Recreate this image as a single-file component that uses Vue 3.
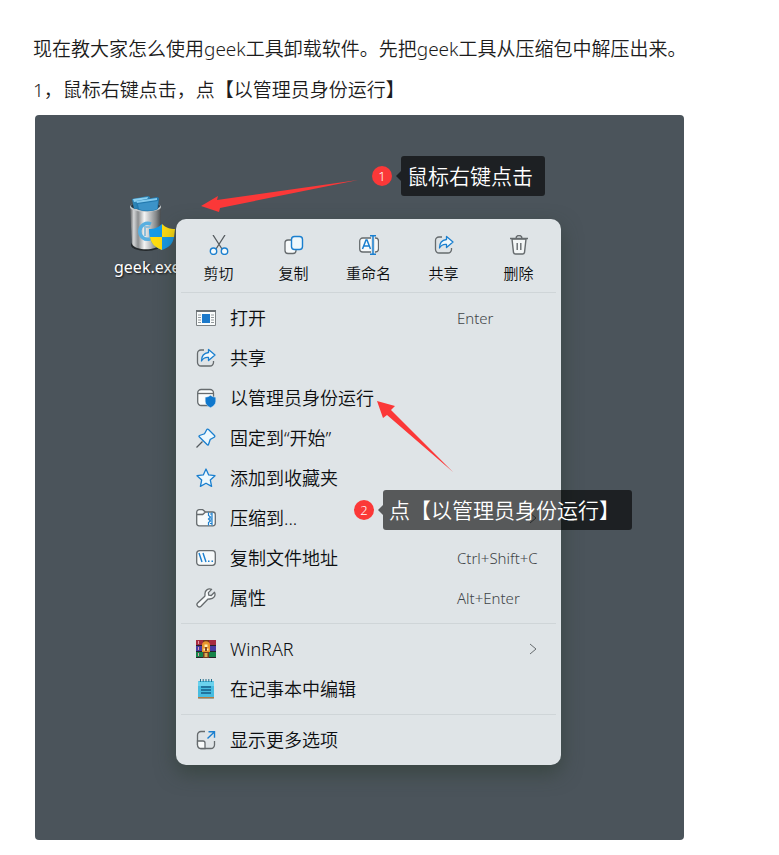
<template>
  <main class="article">
    <p>现在教大家怎么使用geek工具卸载软件。先把geek工具从压缩包中解压出来。</p>
    <p>1，鼠标右键点击，点【以管理员身份运行】</p>

    <section class="desktop">
      <div class="shortcut">
        <svg class="bin" viewBox="0 0 52 60" aria-hidden="true">
          <defs>
            <linearGradient id="metal" x1="0" x2="1" y1="0" y2="0">
              <stop offset="0" stop-color="#55585a" />
              <stop offset="0.12" stop-color="#d4d6d7" />
              <stop offset="0.26" stop-color="#8b8e90" />
              <stop offset="0.46" stop-color="#f4f5f5" />
              <stop offset="0.68" stop-color="#b3b6b8" />
              <stop offset="0.84" stop-color="#85888a" />
              <stop offset="1" stop-color="#484b4d" />
            </linearGradient>
          </defs>
          <ellipse cx="20" cy="50" rx="15" ry="6" fill="#24292c" />
          <path d="M4 12 6 49c3 7 25 7 28 0l1-37z" fill="url(#metal)" />
          <ellipse cx="19.500" cy="12" rx="15.500" ry="5" fill="#c5c9cb" />
          <ellipse cx="19.500" cy="11" rx="14.500" ry="4" fill="#24333d" />
          <path d="M6 4 22 1l2 1-1 11-15 1z" fill="#2c83b5" />
          <path d="m7 4 15-2-1 3-13 2z" fill="#8bd0f0" />
          <path d="m10 6 21-4 2 1-1 11c-5 3-16 3-21 0z" fill="#2379ae" />
          <path d="m10 6 21-3v2L11 8z" fill="#82c9ed" />
          <path d="m12 9 20-3-1 8c-5 2-13 2-18 0z" fill="#3c93c8" />
          <path d="M25 29a8 8 0 1 0-1 15" fill="none" stroke="#58afe0" stroke-width="3.500" />
          <path d="M24 32h-5v9" fill="none" stroke="#8ebfdb" stroke-width="2" />
          <path d="M36 29c-4 4-8 5-13 5 0 12 3 17 13 21z" fill="#169ae8" />
          <path d="M36 29v13h12l1-8c-5 0-9-1-13-5z" fill="#ffdc10" />
          <path d="M36 42h12c-1 6-4 10-12 13z" fill="#169ae8" />
          <path d="M24 42h12v13c-8-3-11-7-12-13z" fill="#ffdc10" />
        </svg>
        <span>geek.exe</span>
      </div>

      <nav class="menu" aria-label="geek.exe">
        <ul class="toolbar">
          <li v-for="tool in tools" :key="tool.label">
            <button type="button">
              <svg class="icon" viewBox="0 0 20 20" aria-hidden="true" v-html="icons[tool.icon]"></svg>
              <span>{{ tool.label }}</span>
            </button>
          </li>
        </ul>

        <ul v-for="(group, i) in groups" :key="i" class="group">
          <li v-for="item in group" :key="item.label">
            <button type="button">
              <svg class="icon" viewBox="0 0 20 20" aria-hidden="true" v-html="icons[item.icon]"></svg>
              <span>{{ item.label }}</span>
              <kbd v-if="item.keys">{{ item.keys }}</kbd>
              <svg v-if="item.more" class="chevron" viewBox="0 0 8 12" aria-hidden="true">
                <path d="m1 1 6 5-6 5" />
              </svg>
            </button>
          </li>
        </ul>
      </nav>

      <svg class="arrow arrow-one" viewBox="0 0 158 32" aria-hidden="true">
        <path d="M0 26 17 16 16 20 157 0 19 28 18 32z" />
      </svg>
      <svg class="arrow arrow-two" viewBox="0 0 76 71" aria-hidden="true">
        <path d="M0 0 18 5 14 9 76 71 10 14 6 17z" />
      </svg>

      <div class="callout callout-one">
        <span class="badge">1</span>
        <span class="tip">鼠标右键点击</span>
      </div>
      <div class="callout callout-two">
        <span class="badge">2</span>
        <span class="tip">点【以管理员身份运行】</span>
      </div>
    </section>
  </main>
</template>

<script setup>
const share = `
  <path d="M8 2H5a3.500 3.500 0 0 0-3.500 3.500v9A3.500 3.500 0 0 0 5 18h9a3.500 3.500 0 0 0 3.500-3.500V13" fill="none" stroke="#666b6e" stroke-width="1.300"/>
  <path d="M12.500 1.500 19 7l-6.500 5.500V9.500C9 9 7 10.500 5.500 13 5.500 8 8 5 12.500 4.500z" fill="#f0f8fc" stroke="#1a7fcf" stroke-width="1.300" stroke-linejoin="round"/>`;

const icons = {
  share,
  cut: `
    <path d="M4 0 13 14M16 0 7 14" stroke="#555b5f" stroke-width="1.300"/>
    <circle cx="4.500" cy="16.200" r="3.200" fill="#f4fafc" stroke="#1a7fcf" stroke-width="1.400"/>
    <circle cx="15.500" cy="16.200" r="3.200" fill="#f4fafc" stroke="#1a7fcf" stroke-width="1.400"/>`,
  copy: `
    <path d="M7 5H4a3 3 0 0 0-3 3v7.500a3 3 0 0 0 3 3h5a3 3 0 0 0 3-3V15" fill="#f7fafb" stroke="#666b6e" stroke-width="1.300"/>
    <rect x="7.500" y="1.500" width="11" height="13" rx="3" fill="#eef7fb" stroke="#1a7fcf" stroke-width="1.400"/>`,
  rename: `
    <path d="M12 3H3.700a3 3 0 0 0-3 3v8a3 3 0 0 0 3 3H12M16 3h.500a3 3 0 0 1 3 3v8a3 3 0 0 1-3 3H16" fill="#f7fafb" stroke="#666b6e" stroke-width="1.300"/>
    <path d="m3.500 14 3.500-9h1l3.500 9M5 11h5M11 .700h6M11 19.300h6M14 1v18" fill="none" stroke="#1a7fcf" stroke-width="1.500"/>`,
  trash: `
    <path d="m3 4 1.500 13.500A2 2 0 0 0 6.500 19h7a2 2 0 0 0 2-1.500L17 4z" fill="#f3f6f7" stroke="#666b6e" stroke-width="1.400"/>
    <path d="M1 3.500h18M7 3.500a3 3 0 0 1 6 0M8.200 8v7M11.800 8v7" fill="none" stroke="#666b6e" stroke-width="1.400"/>`,
  open: `
    <path d="M.500 2.500h19v15H.500z" fill="#fafcfc" stroke="#7c8285"/>
    <path d="M0 3h20" stroke="#6c7276" stroke-width="2"/>
    <path d="M2 7h3M2 9.500h3M2 12h3M2 14.500h3M15 7h3M15 9.500h3M15 12h3M15 14.500h3" stroke="#93999c"/>
    <path d="M6 6h8v9H6z" fill="#1c79ca"/>`,
  admin: `
    <rect x="1.700" y="1.500" width="15.800" height="16" rx="3.500" fill="#fafcfc" stroke="#666b6e" stroke-width="1.300"/>
    <path d="M2 5.500h15.500" stroke="#666b6e" stroke-width="1.300"/>
    <path d="M14.500 7.200c1.600 1.300 3.200 1.900 5.300 2v4c0 3-2 5-5.300 6.500-3.300-1.500-5.300-3.500-5.300-6.500v-4c2.100-.100 3.700-.700 5.300-2z" fill="#0f78cd" stroke="#e4edf2" stroke-width=".500"/>`,
  pin: `
    <path d="m6.500 13.500-6 6" stroke="#555b5f" stroke-width="1.300"/>
    <path d="m12.500 1.500 6 6c.6.6.4 1.400-.3 1.800l-4 2.200-1.700 5c-.2.600-.8.700-1.200.300L3.200 8.700c-.4-.4-.3-1 .3-1.200l5-1.700 2.200-4c.4-.7 1.200-.9 1.800-.3z" fill="#edf8fd" stroke="#1a7fcf" stroke-width="1.300"/>`,
  star: `
    <path d="m10 1 2.700 5.900 6.300.8-4.700 4.300 1.300 6.400L10 15.200l-5.600 3.200L5.700 12 1 7.700l6.300-.8z" fill="#edf8fd" stroke="#1a7fcf" stroke-width="1.300" stroke-linejoin="round"/>`,
  zip: `
    <path d="M.700 4.200a2.500 2.500 0 0 1 2.500-2.500h3.500L9.500 4h7.300a2.500 2.500 0 0 1 2.500 2.500v8.800a2.500 2.500 0 0 1-2.500 2.500H3.200a2.500 2.500 0 0 1-2.500-2.500zM.700 6.500h6L9.500 4" fill="#f7fafb" stroke="#666b6e" stroke-width="1.300"/>
    <path d="M12.500 4.500v3l2 1.500-2 2 2 2-2 1.500v3M16 4.500v13" fill="none" stroke="#1a7fcf" stroke-width="1.200"/>
    <path d="M14 6h2M14 11h2M14 15.500h2" stroke="#1a7fcf"/>`,
  path: `
    <rect x=".700" y="2.700" width="18.600" height="14.600" rx="3" fill="#f7fafb" stroke="#666b6e" stroke-width="1.300"/>
    <path d="m3 5 3 9M7 5l3 9M12 13.300h1.500M15.500 13.300H17" stroke="#1a7fcf" stroke-width="1.400"/>`,
  wrench: `
    <path d="M18.500 4.300 15.300 7.500l-2.600-.3-.3-2.600 3.200-3.200C12.300 0 8.500 2.300 9 6.500c0 .700 0 1.200-.200 1.700L1.600 15c-2 2.200 1.200 5.300 3.400 3.300l6.800-7.100c.6-.2 1.200-.2 1.900-.2 4 .100 6.400-3.400 4.800-6.700z" fill="#f7fafb" stroke="#666b6e" stroke-width="1.300" stroke-linejoin="round"/>`,
  rar: `
    <path d="M0 1h20v6H0z" fill="#a62b40"/>
    <path d="M0 7h20v6H0z" fill="#493aa2"/>
    <path d="M0 13h20v6H0z" fill="#16834a"/>
    <path d="M0 6.500h20M0 12.500h20M0 18.500h20" stroke="#292027"/>
    <path d="M2.500 2v3M2.500 8v3M2.500 14v3" stroke="#e19aaa"/>
    <path d="M7 1h6v18H7z" fill="#733b20"/>
    <path d="M6 6c0-5 8-5 8 0v7H6z" fill="#e9952d"/>
    <path d="M8.500 5.500h3V8h-3zM7.500 9.500h5v2h-5z" fill="#fff0b4"/>
    <path d="M9 8h2v4H9z" fill="#82451f"/>
    <path d="M8.500 14h3v4h-3z" fill="#d7b154"/>`,
  notepad: `
    <rect x="2" y="2" width="16" height="17.500" rx="1" fill="#47bce0"/>
    <path d="M2 3h16v4H2z" fill="#6bd2ed"/>
    <path d="M2 18h16v1.500H2z" fill="#b47a43"/>
    <path d="M4.500 0v3M7.200 0v3M10 0v3M12.800 0v3M15.500 0v3" stroke="#236f8c"/>
    <path d="M5 8h10M5 11h10M5 14h10" stroke="#165e88" stroke-width="1.300"/>`,
  expand: `
    <path d="M9 1.500H5A3.500 3.500 0 0 0 1.500 5v10A3.500 3.500 0 0 0 5 18.500h10a3.500 3.500 0 0 0 3.500-3.500v-4" fill="none" stroke="#666b6e" stroke-width="1.300"/>
    <path d="M1.500 11H7a2 2 0 0 1 2 2v5.500H5A3.500 3.500 0 0 1 1.500 15z" fill="#fafcfc" stroke="#666b6e" stroke-width="1.300"/>
    <path d="M12.500 1.700h6v6M18.300 1.900 11.500 8.500" fill="none" stroke="#1a7fcf" stroke-width="1.400"/>`,
};

const tools = [
  { icon: "cut", label: "剪切" },
  { icon: "copy", label: "复制" },
  { icon: "rename", label: "重命名" },
  { icon: "share", label: "共享" },
  { icon: "trash", label: "删除" },
];

const groups = [
  [
    { icon: "open", label: "打开", keys: "Enter" },
    { icon: "share", label: "共享" },
    { icon: "admin", label: "以管理员身份运行" },
    { icon: "pin", label: "固定到“开始”" },
    { icon: "star", label: "添加到收藏夹" },
    { icon: "zip", label: "压缩到...", more: true },
    { icon: "path", label: "复制文件地址", keys: "Ctrl+Shift+C" },
    { icon: "wrench", label: "属性", keys: "Alt+Enter" },
  ],
  [
    { icon: "rar", label: "WinRAR", more: true },
    { icon: "notepad", label: "在记事本中编辑" },
  ],
  [{ icon: "expand", label: "显示更多选项" }],
];
</script>

<style>
body {
  margin: 0;
  background: #fff;
}
</style>

<style scoped>
.article {
  padding: 29px 32px 15px 33px;
  font-family: "Noto Sans", "Noto Sans CJK SC", sans-serif;
  font-weight: 350;
  color: #1c1c1c;
}

p {
  margin: 0;
  font-size: 19px;
  line-height: 41px;
}

ul {
  list-style: none;
  margin: 0;
  padding: 0;
}

button {
  border: 0;
  padding: 0;
  background: none;
  color: #0c0e10;
  font-family: inherit;
  font-weight: inherit;
}

.desktop {
  position: relative;
  margin: 4px 63px 0 2px;
  padding: 104px 0 75px 141px;
  border-radius: 4px;
  background: #4b545b;
}

.shortcut {
  position: absolute;
  left: 79px;
  top: 80px;
  display: flex;
  flex-direction: column;
  color: #fff;
  font-size: 16px;
  font-weight: 400;
  line-height: 24px;
  text-shadow: 1px 1px 2px #111;
}

.bin {
  width: 52px;
  height: 60px;
  margin-left: 12px;
}

.menu {
  position: relative;
  box-sizing: border-box;
  max-width: 385px;
  padding: 0 5px;
  border-radius: 10px;
  background: #dfe4e7;
  box-shadow: 0 8px 20px rgba(45, 60, 48, 0.6);
}

.toolbar {
  display: grid;
  grid-template-columns: repeat(5, 1fr);
  padding: 16px 0 7px;
}

.toolbar button {
  display: flex;
  flex-direction: column;
  align-items: center;
  gap: 6px;
  width: 100%;
  font-size: 15px;
  line-height: 24px;
}

.icon {
  width: 20px;
  height: 20px;
}

.group {
  padding: 5px 0;
  border-top: 1px solid #cfd5d8;
}

.group button {
  display: grid;
  grid-template-columns: 20px 1fr 99px;
  column-gap: 14px;
  align-items: center;
  width: 100%;
  height: 40px;
  padding-left: 15px;
  font-size: 18px;
  line-height: 24px;
  text-align: left;
}

.group span {
  white-space: nowrap;
}

kbd {
  color: #3f4548;
  font-family: inherit;
  font-size: 15px;
}

.chevron {
  justify-self: end;
  width: 8px;
  height: 12px;
  margin-right: 19px;
  fill: none;
  stroke: #666b6e;
}

.arrow {
  position: absolute;
  fill: #fb3838;
}

.arrow-one {
  left: 166px;
  top: 65px;
  width: 158px;
}

.arrow-two {
  left: 342px;
  top: 286px;
  width: 76px;
}

.callout {
  position: absolute;
  display: flex;
  align-items: center;
  gap: 9px;
  color: #fff;
  white-space: nowrap;
}

.callout-one {
  left: 337px;
  top: 41px;
}

.callout-two {
  left: 319px;
  top: 375px;
}

.badge {
  width: 20px;
  border-radius: 50%;
  background: #fb3838;
  font-size: 13px;
  line-height: 20px;
  text-align: center;
}

.tip {
  position: relative;
  padding: 0 12px 0 6px;
  border-radius: 3px;
  background: rgba(0, 0, 0, 0.61);
  font-size: 21px;
  line-height: 40px;
}

.tip::before {
  content: "";
  position: absolute;
  right: 100%;
  top: 15px;
  border: 5px solid transparent;
  border-left: 0;
  border-right-color: rgba(0, 0, 0, 0.61);
}
</style>
